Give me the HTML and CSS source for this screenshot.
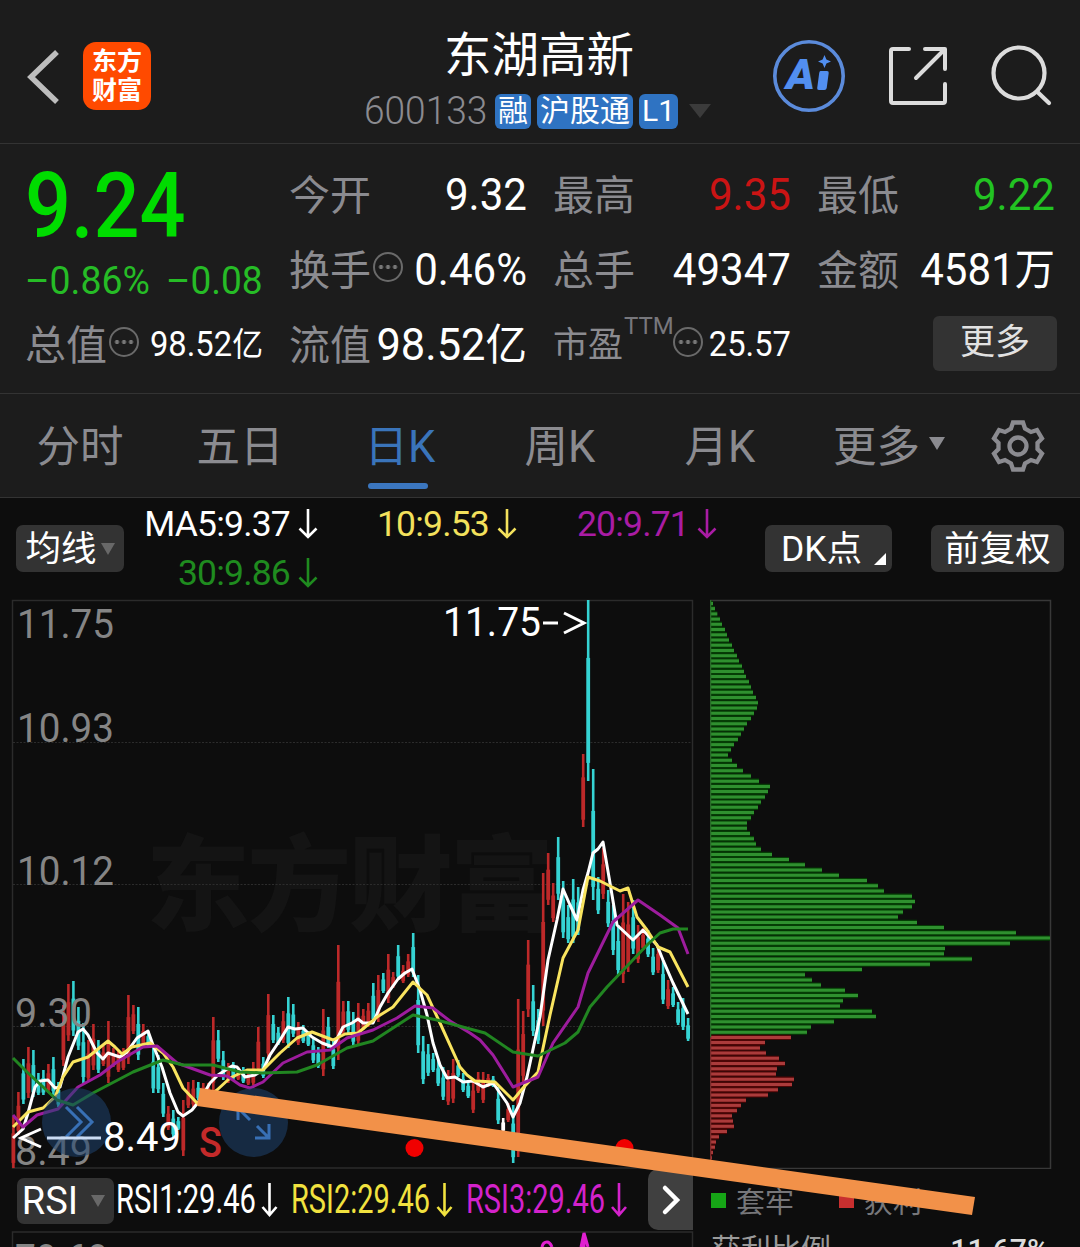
FILE: index.html
```
<!DOCTYPE html>
<html lang="zh-CN">
<head>
    <meta charset="UTF-8">
    <meta name="viewport" content="width=device-width, initial-scale=1.0">
    <title>东湖高新 600133</title>
    <link rel="stylesheet" href="styles.css">
</head>
<body>
<div class="page">
    <!-- Header -->
    <header class="header">
        <svg class="back" width="36" height="58" viewBox="0 0 36 58"><path d="M33 4L7 29L33 54" fill="none" stroke="#bdbdbd" stroke-width="5.5"/></svg>
        <div class="logo"><span>东方</span><span>财富</span></div>
        <div class="title-box">
            <div class="title">东湖高新</div>
            <div class="subtitle">
                <span class="code">600133</span>
                <span class="tag">融</span>
                <span class="tag">沪股通</span>
                <span class="tag">L1</span>
                <span class="tri tri-dark"></span>
            </div>
        </div>
        <div class="header-icons">
            <svg width="74" height="74" viewBox="0 0 74 74">
                <circle cx="37" cy="37" r="34.2" fill="none" stroke="#5b8bdb" stroke-width="3.6"/>
                <text class="ai-text" x="14" y="50" textLength="29" lengthAdjust="spacingAndGlyphs">A</text>
                <path d="M48.500 32h6.500q2 0 1.700 2l-2 15q-.300 2-2.300 2h-5.500q-2 0-1.700-2l2-15q.300-2 1.300-2z" fill="#528ff0"/>
                <path d="M52.500 16l1.900 4.600l4.600 1.900l-4.600 1.900l-1.900 4.600l-1.900-4.600l-4.600-1.900l4.600-1.900z" fill="#528ff0"/>
            </svg>
            <svg class="share" width="60" height="60" viewBox="0 0 60 60" fill="none" stroke="#dcdcdc" stroke-width="4" stroke-linecap="round" stroke-linejoin="round">
                <path d="M21 3H5a2 2 0 0 0-2 2V55a2 2 0 0 0 2 2H55a2 2 0 0 0 2-2V38M37 3H57V23M56 4L28 32"/>
            </svg>
            <svg class="search" width="62" height="62" viewBox="0 0 62 62" fill="none" stroke="#dcdcdc" stroke-width="4.200" stroke-linecap="round">
                <circle cx="28" cy="28" r="25.500"/><path d="M46.500 47L58 58"/>
            </svg>
        </div>
    </header>

    <!-- Quote -->
    <section class="quote">
        <div class="price-box">
            <div class="price">9.24</div>
            <div class="change"><span class="pct">–0.86%</span><span class="diff">–0.08</span></div>
        </div>
        <div class="cell"><span class="label">今开</span><span class="value">9.32</span></div>
        <div class="cell"><span class="label">最高</span><span class="value red">9.35</span></div>
        <div class="cell"><span class="label">最低</span><span class="value green">9.22</span></div>
        <div class="cell"><span class="label">换手</span><i class="info"></i><span class="value">0.46%</span></div>
        <div class="cell"><span class="label">总手</span><span class="value">49347</span></div>
        <div class="cell"><span class="label">金额</span><span class="value">4581<b>万</b></span></div>
        <div class="cell"><span class="label">总值</span><i class="info"></i><span class="value small">98.52<b>亿</b></span></div>
        <div class="cell"><span class="label">流值</span><span class="value wide">98.52<b>亿</b></span></div>
        <div class="cell"><span class="label label-pe">市盈</span><sup class="ttm">TTM</sup><i class="info"></i><span class="value small">25.57</span></div>
        <div class="cell cell-more"><button class="more">更多</button></div>
    </section>

    <!-- Period tabs -->
    <nav class="tabs">
        <a class="tab">分时</a>
        <a class="tab">五日</a>
        <a class="tab active">日K</a>
        <a class="tab">周K</a>
        <a class="tab">月K</a>
        <a class="tab tab-more">更多<span class="tri tri-tab"></span></a>
        <svg class="gear" width="54" height="54" viewBox="-27 -27 54 54" fill="none" stroke="#8b8b90" stroke-width="4.300">
            <path d="M-5-23.500H5L7-17.500L13-14L19-16L24-7.500L19.500-3V3L24 7.500L19 16L13 14L7 17.500L5 23.500H-5L-7 17.500L-13 14L-19 16L-24 7.500L-19.500 3V-3L-24-7.500L-19-16L-13-14L-7-17.500Z"/>
            <circle r="8.500"/>
        </svg>
    </nav>

    <!-- Moving averages -->
    <section class="ma-bar">
        <button class="btn btn-ma">均线<span class="tri tri-btn"></span></button>
        <div class="ma-list">
            <span class="ma ma5">MA5:9.37<svg class="down" viewBox="0 0 20 32"><path d="M10 1V29M1.500 20.500L10 29L18.500 20.500"/></svg></span>
            <span class="ma ma10">10:9.53<svg class="down" viewBox="0 0 20 32"><path d="M10 1V29M1.500 20.500L10 29L18.500 20.500"/></svg></span>
            <span class="ma ma20">20:9.71<svg class="down" viewBox="0 0 20 32"><path d="M10 1V29M1.500 20.500L10 29L18.500 20.500"/></svg></span>
            <span class="ma ma30">30:9.86<svg class="down" viewBox="0 0 20 32"><path d="M10 1V29M1.500 20.500L10 29L18.500 20.500"/></svg></span>
        </div>
        <button class="btn btn-dk"><span class="dk">DK</span>点<span class="corner"></span></button>
        <button class="btn btn-fq">前复权</button>
    </section>

    <!-- Charts -->
    <section class="charts">
        <div class="left">
            <svg class="kline" width="694" height="570" viewBox="0 599 694 570">
                <text class="watermark" x="146" y="923" textLength="408">东方财富</text>
                <rect class="frame" x="12.500" y="600.500" width="680" height="567.500"/>
                <path class="grid" d="M13 742.500H692M13 884.500H692M13 1026.500H692"/>
                <g id="candles"></g>
                <g class="axis">
                    <text x="17" y="638" textLength="97" lengthAdjust="spacingAndGlyphs">11.75</text>
                    <text x="17" y="742" textLength="97" lengthAdjust="spacingAndGlyphs">10.93</text>
                    <text x="17" y="885" textLength="97" lengthAdjust="spacingAndGlyphs">10.12</text>
                    <text x="15" y="1027" textLength="77" lengthAdjust="spacingAndGlyphs">9.30</text>
                    <text x="15" y="1165" textLength="77" lengthAdjust="spacingAndGlyphs">8.49</text>
                </g>
                <polyline class="line w" points="13,1138 23,1129 28,1113 35,1087 40,1081 48,1080 55,1088 60,1087 68,1057 78,1032 83,1029 88,1035 97,1053 103,1059 108,1053 120,1057 127,1052 137,1038 148,1031 153,1045 162,1067 170,1093 178,1112 183,1116 192,1110 200,1100 210,1083 218,1075 232,1066 237,1067 245,1077 255,1075 263,1070 270,1055 280,1040 288,1027 295,1029 303,1028 312,1037 322,1043 333,1047 343,1027 352,1023 358,1019 363,1023 373,1023 380,1007 388,993 398,979 405,973 412,969 420,990 427,1015 433,1043 440,1065 447,1078 455,1077 463,1082 473,1081 483,1087 493,1083 507,1103 513,1117 520,1103 527,1077 540,1017 548,960 557,920 563,889 570,905 577,920 583,890 588,873 593,853 598,849 603,842 610,883 617,925 633,940 643,930 657,945 663,960 673,983 688,1014"/>
                <polyline class="line y" points="13,1127 28,1112 43,1108 55,1097 63,1077 73,1062 88,1057 108,1041 115,1047 122,1054 132,1047 150,1043 163,1053 173,1067 183,1088 197,1103 217,1090 230,1078 247,1070 263,1070 280,1053 297,1038 312,1032 333,1040 345,1034 358,1033 377,1017 393,1007 413,982 427,995 440,1023 460,1067 467,1075 475,1081 495,1082 513,1100 523,1088 538,1072 550,1015 563,958 578,930 588,877 600,881 610,886 620,891 628,888 637,917 647,930 658,947 670,952 688,987"/>
                <polyline class="line p" points="13,1115 23,1127 37,1115 58,1109 78,1087 100,1075 117,1062 143,1047 157,1046 177,1063 210,1075 227,1076 240,1085 250,1088 263,1082 283,1063 307,1052 330,1050 347,1038 373,1030 397,1018 415,1006 433,1008 450,1021 470,1033 480,1040 493,1055 513,1087 523,1083 538,1077 553,1043 578,1007 588,973 613,922 638,900 660,915 678,928 688,954"/>
                <polyline class="line g" points="13,1058 27,1072 57,1100 73,1105 93,1093 133,1072 163,1060 183,1065 213,1065 240,1072 263,1073 297,1072 317,1065 347,1048 373,1041 413,1015 437,1020 470,1029 485,1033 513,1052 538,1056 565,1043 578,1032 590,1007 607,987 630,963 648,944 660,933 673,929 688,929"/>
                <circle class="round" cx="76.500" cy="1122.500" r="34.500"/>
                <circle class="round" cx="253.500" cy="1122.500" r="34.500"/>
                <path class="round-icon" d="M66 1107L81 1122L66 1137M77 1107L92 1122L77 1137"/>
                <path class="round-icon" d="M238 1120V1108H250M239 1109L250 1120M257 1126L269 1138M269 1124V1138H255"/>
                <g class="mark">
                    <text x="443" y="636" textLength="98" lengthAdjust="spacingAndGlyphs">11.75</text>
                    <path d="M543 623H558M564 613L584 623L564 633"/>
                    <path d="M41 1129L21 1138L41 1147"/>
                    <path class="dash" d="M47 1138H101"/>
                    <text x="103" y="1151" textLength="78" lengthAdjust="spacingAndGlyphs">8.49</text>
                </g>
                <text class="sell" x="199" y="1157">S</text>
                <circle cx="414.500" cy="1148" r="9" fill="#f00000"/>
                <circle cx="624.500" cy="1148" r="9" fill="#f00000"/>
            </svg>
            <div class="rsi-bar">
                <button class="btn btn-rsi"><span>RSI</span><span class="tri tri-btn"></span></button>
                <svg class="rsi-values" width="530" height="62" viewBox="115 1169 530 62">
                    <g class="r1"><text x="116" y="1213" textLength="140" lengthAdjust="spacingAndGlyphs">RSI1:29.46</text><path d="M269.500 1183V1214M262.500 1207L269.500 1215L276.500 1207"/></g>
                    <g class="r2"><text x="291" y="1213" textLength="139" lengthAdjust="spacingAndGlyphs">RSI2:29.46</text><path d="M444.500 1183V1214M437.500 1207L444.500 1215L451.500 1207"/></g>
                    <g class="r3"><text x="466" y="1213" textLength="139" lengthAdjust="spacingAndGlyphs">RSI3:29.46</text><path d="M619 1183V1214M612 1207L619 1215L626 1207"/></g>
                </svg>
                <button class="next"><svg width="20" height="32" viewBox="0 0 20 32"><path d="M4 4L16 16L4 28" fill="none" stroke="#fff" stroke-width="4.500" stroke-linecap="round"/></svg></button>
            </div>
            <svg class="rsi-chart" width="694" height="16" viewBox="0 1231 694 16">
                <path class="frame" d="M12.500 1247V1232H692.500V1247"/>
                <g class="axis"><text x="15" y="1273" textLength="93" lengthAdjust="spacingAndGlyphs">70.60</text></g>
                <path d="M542 1247Q543 1242 547 1242Q550 1242 552 1247M581 1247L584 1233L588 1247M584 1234V1247" fill="none" stroke="#e020d0" stroke-width="3"/>
            </svg>
        </div>
        <div class="right">
            <svg class="chips" width="342" height="570" viewBox="710 599 342 570">
                <path class="chip-frame" d="M710 600.500H1050.500V1168.500H710.500V600"/>
                <g id="chips"></g>
            </svg>
            <div class="legend">
                <span><i class="box box-green"></i>套牢</span>
                <span><i class="box box-red"></i>获利</span>
            </div>
            <div class="ratio"><span>获利比例</span><b>11.67%</b></div>
        </div>
    </section>

    <svg class="trend" width="1080" height="1247" viewBox="0 0 1080 1247"><path d="M200 1088L975 1197L972 1215L197 1106Z" fill="#f29149"/></svg>
</div>
<script src="chart.js"></script>
</body>
</html>
```
FILE: styles.css
```
* {
    box-sizing: border-box;
}

body {
    margin: 0;
    background-color: #0d0d0d;
    color: #fff;
    font-family: Roboto, "Noto Sans CJK SC", sans-serif;
}

button {
    border: none;
    color: #fff;
    font-family: inherit;
    padding: 0;
}

svg {
    display: block;
    flex-shrink: 0;
}

.page {
    position: relative;
    width: 1080px;
    height: 1247px;
    overflow: hidden;
}

/* header */
.header {
    display: flex;
    height: 144px;
    padding: 0 27px 0 24px;
    background-color: #1c1c1c;
    border-bottom: 1px solid #333;
}

.back {
    margin-top: 48px;
}

.logo {
    display: flex;
    flex-direction: column;
    align-items: center;
    width: 68px;
    height: 68px;
    margin: 42px 0 0 23px;
    padding-top: 5px;
    border-radius: 13px;
    background-color: #ff4a00;
    font-size: 25px;
    font-weight: 700;
    line-height: 29px;
}

.title-box {
    flex: 1;
    margin-left: 213px;
    padding-top: 26px;
}

.title {
    margin-left: 80px;
    font-size: 47.5px;
    line-height: 60px;
}

.subtitle {
    display: flex;
    align-items: center;
    height: 36px;
    margin-top: 7px;
}

.code {
    width: 131px;
    color: #8b8b90;
    font-size: 39px;
    font-weight: 300;
    transform: scaleX(0.95);
    transform-origin: left;
}

.tag {
    height: 35px;
    margin-right: 6px;
    padding: 0 3px;
    border-radius: 6px;
    background-color: #2f73c2;
    font-size: 30px;
    line-height: 34px;
    white-space: nowrap;
}

.tri {
    display: inline-block;
    border-style: solid;
    border-color: transparent;
    border-bottom-width: 0;
}

.tri-dark {
    margin-left: 5px;
    border-width: 14px 11px 0;
    border-top-color: #3b3b3b;
}

.header-icons {
    display: flex;
    padding-top: 39px;
}

.ai-text {
    fill: #528ff0;
    font-size: 42px;
    font-weight: 900;
    font-style: italic;
}

.share {
    margin: 7px 0 0 42px;
}

.search {
    margin: 6px 0 0 43px;
}

/* quote */
.quote {
    display: grid;
    grid-template-columns: repeat(4, 238px);
    grid-template-rows: repeat(3, 75px);
    column-gap: 26px;
    height: 250px;
    padding: 13px 0 0 25px;
    background-color: #1c1c1c;
    border-bottom: 1px solid #333;
}

.price-box {
    grid-row: span 2;
}

.price {
    height: 94px;
    color: #00dc00;
    font-size: 90px;
    font-weight: 500;
    line-height: 100px;
    transform: scaleX(0.9);
    transform-origin: left;
}

.change {
    display: flex;
    justify-content: space-between;
    color: #26bc26;
    font-size: 39px;
    line-height: 61px;
}

.pct {
    transform: scaleX(0.96);
    transform-origin: left;
}

.diff {
    transform: scaleX(0.95);
    transform-origin: right;
}

.cell {
    display: flex;
    align-items: center;
    height: 75px;
    white-space: nowrap;
}

.label {
    padding-top: 3px;
    color: #8b8b90;
    font-size: 41px;
    line-height: 60px;
}

.label-pe {
    font-size: 35px;
}

.ttm {
    width: 47px;
    margin: -38px 0 0 1px;
    color: #77777c;
    font-size: 24px;
    line-height: 28px;
}

.info {
    width: 30px;
    height: 30px;
    margin: -6px 0 0 2px;
    border: 2.5px solid #6a6a6a;
    border-radius: 50%;
    background: radial-gradient(circle, #777 1.8px, transparent 2.3px) center / 7px 30px;
    background-clip: content-box;
    padding: 0 2px;
}

.value {
    flex: 1 0 0;
    width: 0;
    display: flex;
    justify-content: flex-end;
    align-items: baseline;
    font-size: 45px;
    line-height: 60px;
    transform: scaleX(0.935);
    transform-origin: right;
}

.value b {
    font-weight: 400;
    font-size: 43px;
}

.value.wide {
    transform: scaleX(0.965);
}

.value.small {
    font-size: 35px;
}

.value.small b {
    font-size: 33px;
}

.red {
    color: #cb1414;
}

.green {
    color: #22c322;
}

.cell-more {
    justify-content: flex-end;
}

.more {
    width: 124px;
    height: 55px;
    margin: -3px -2px 0 0;
    border-radius: 6px;
    background-color: #333;
    color: #e2e2e2;
    font-size: 35px;
    line-height: 52px;
}

/* tabs */
.tabs {
    display: flex;
    height: 104px;
    background-color: #1c1c1c;
    border-bottom: 1px solid #333;
}

.tab {
    display: flex;
    align-items: center;
    justify-content: center;
    width: 160px;
    height: 98px;
    color: #8b8b90;
    font-size: 43.5px;
}

.tab-more {
    width: 178px;
}

.tab.active {
    position: relative;
    color: #3a74ba;
}

.tab.active::after {
    content: "";
    position: absolute;
    left: 48px;
    bottom: 3px;
    width: 60px;
    height: 6px;
    border-radius: 3px;
    background-color: #3b76bf;
}

.tri-tab {
    margin: 0 0 0 9px;
    border-width: 13px 8px 0;
    border-top-color: #8b8b90;
}

.gear {
    margin: 25px 0 0 13px;
}

/* moving averages */
.ma-bar {
    display: flex;
    height: 101px;
    padding: 27px 16px 0;
}

.btn {
    display: flex;
    align-items: center;
    justify-content: center;
    height: 47px;
    border-radius: 7px;
    background-color: #333;
    font-size: 35.5px;
    line-height: 44px;
    white-space: nowrap;
}

.btn-ma {
    width: 108px;
}

.tri-btn {
    margin-left: 4px;
    border-width: 12px 7px 0;
    border-top-color: #686868;
}

.ma-list {
    display: grid;
    grid-template-columns: 173px 199px 200px;
    grid-auto-rows: 49px;
    width: 641px;
    margin: -26px 0 0 21px;
}

.ma {
    display: flex;
    align-items: center;
    justify-content: flex-end;
    font-size: 35.5px;
    letter-spacing: -0.8px;
}

.down {
    width: 20px;
    height: 32px;
    margin-left: 8px;
    fill: none;
    stroke: currentColor;
    stroke-width: 2.6;
}

.ma5 {
    color: #fff;
}

.ma10 {
    color: #f3e15c;
}

.ma20 {
    color: #a91ca4;
}

.ma30 {
    color: #1f8b1f;
}

.btn-dk {
    position: relative;
    width: 127px;
    margin-left: -20px;
    padding-right: 14px;
    margin-right: 39px;
}

.corner {
    position: absolute;
    right: 6px;
    bottom: 7px;
    border-left: 12px solid transparent;
    border-bottom: 12px solid #fff;
}

.btn-fq {
    width: 133px;
}

.btn-ma,
.btn-dk,
.btn-fq,
.btn-rsi {
    flex-shrink: 0;
}

/* charts */
.charts {
    display: flex;
}

.left {
    width: 694px;
}

.right {
    width: 342px;
    margin-left: 16px;
}

.frame {
    fill: none;
    stroke: #2b2b2b;
    stroke-width: 1.5;
}

.chip-frame {
    fill: none;
    stroke: #383838;
    stroke-width: 1.5;
}

.grid {
    stroke: #2c2c2c;
    stroke-dasharray: 2 1.5;
}

.watermark {
    fill: #141414;
    font-size: 104px;
    font-weight: 900;
}

.axis text {
    fill: #858585;
    font-size: 41px;
}

.candle-up {
    stroke: #bd2929;
}

.candle-down {
    stroke: #35d3d3;
}

.candle-flat {
    stroke: #fff;
}

.line {
    fill: none;
    stroke-width: 3;
    stroke-linejoin: round;
}

.w {
    stroke: #fff;
}

.y {
    stroke: #f9e45f;
}

.p {
    stroke: #9d1c9d;
}

.g {
    stroke: #218521;
}

.round {
    fill: rgba(31, 67, 112, 0.55);
}

.round-icon {
    fill: none;
    stroke: #3870b5;
    stroke-width: 3;
}

.mark text {
    fill: #fff;
    font-size: 41px;
}

.mark path {
    fill: none;
    stroke: #fff;
    stroke-width: 3;
}

.mark .dash {
    stroke: #cbdcf4;
}

.sell {
    fill: #c42a2a;
    font-size: 42px;
    font-weight: 500;
    transform: scaleX(0.9);
    transform-box: fill-box;
}

/* rsi */
.rsi-bar {
    display: flex;
    height: 62px;
    padding-left: 17px;
}

.btn-rsi {
    width: 97px;
    height: 46px;
    margin-top: 9px;
    padding-right: 4px;
    font-size: 38px;
    gap: 9px;
}

.rsi-values {
    margin-left: 1px;
}

.rsi-values text {
    font-size: 40px;
}

.rsi-values path {
    fill: none;
    stroke-width: 2.6;
}

.r1 text {
    fill: #fff;
}

.r1 path {
    stroke: #fff;
}

.r2 text {
    fill: #f1e23f;
}

.r2 path {
    stroke: #f1e23f;
}

.r3 text {
    fill: #d322cb;
}

.r3 path {
    stroke: #d322cb;
}

.next {
    display: flex;
    align-items: center;
    justify-content: center;
    width: 45px;
    height: 61px;
    margin-left: 3px;
    border-radius: 10px 0 0 10px;
    background-color: #404040;
}

.legend {
    display: flex;
    gap: 44px;
    height: 62px;
    color: #77777a;
    font-size: 29px;
}

.legend span {
    display: flex;
    align-items: center;
}

.box {
    width: 15px;
    height: 15px;
    margin: 1px 10px 0 1px;
}

.box-green {
    background-color: #16a516;
}

.box-red {
    background-color: #c82f2f;
}

.ratio {
    display: flex;
    justify-content: space-between;
    padding: 0 3px 0 1px;
    color: #9a9a9a;
    font-size: 30px;
    line-height: 38px;
}

.ratio b {
    color: #ddd;
    font-weight: 500;
}

.trend {
    position: absolute;
    left: 0;
    top: 0;
}
```
FILE: chart.js
```
const NS = 'http://www.w3.org/2000/svg';

// type, high, low (u = up, d = down, f = flat)
const candles = `u1117,1168 u1092,1135 d1059,1104 u1047,1098 d1050,1097 d1073,1095 d1070,1095 u1064,1093 d1057,1095 d1082,1107
u1005,1066 u984,1041 d981,1036 d1007,1050 d1023,1083 u1040,1082 u1024,1070 d1040,1073 u1046,1066 u1021,1083
u1048,1067 u1050,1072 u1048,1070 u995,1064 u1005,1034 d1007,1060 u1024,1046 d1031,1047 d1047,1093 d1055,1093
d1083,1117 u1106,1130 d1110,1137 d1117,1130 u1100,1156 u1082,1108 u1080,1107 d1082,1100 u1083,1097 u1083,1097
u1017,1090 d1030,1062 d1051,1080 u1063,1083 d1062,1080 u1067,1080 d1067,1083 u1070,1085 u1062,1085 u1027,1073
d1057,1078 u994,1060 d1015,1043 d1027,1045 u1011,1043 d997,1048 d1004,1037 u1022,1045 d1025,1043 d1031,1046
d1037,1063 d1047,1068 u1009,1076 d1017,1048 d1040,1069 u945,1060 u1001,1034 d1001,1033 d1012,1045 u1003,1045
u1009,1030 u1003,1027 d983,1023 u975,1022 d973,993 u954,1003 u972,988 d945,980 u965,983 u954,977
d933,977 d975,1053 d1036,1084 d1044,1076 d1053,1072 d1060,1086 d1067,1100 u1070,1105 u1059,1103 d1060,1077
d1073,1092 d1080,1098 u1080,1113 u1072,1093 u1072,1103 u1074,1087 d1076,1087 d1087,1124 f1118,1132 u1103,1122
d1105,1163 u999,1157 u1011,1083 u940,1017 d985,1036 d1009,1044 u873,1026 u853,905 u883,922 d837,900
d881,938 d905,943 d879,943 d887,935 u754,827 d600,781 d769,900 d877,914 u848,899 d890,927
d905,955 d925,975 u894,983 u902,972 d900,954 u925,963 u928,950 d930,957 d948,975 u945,973
d960,1004 u980,1009 d987,1007 d1002,1025 d998,1030 d1018,1041`.split(/\s+/);

// bar widths of the cost distribution, top to bottom
const chips = [2, 4, 6.3, 9, 11, 14, 16, 18, 21, 23, 26, 28, 31, 33, 35, 38, 40, 42, 45, 47, 46, 43, 40, 36, 33, 30, 27, 23, 20, 17,
    21, 26, 32, 40, 48, 59, 57, 54, 50, 47, 43, 40, 36, 36, 39, 43, 45, 50, 61, 78, 94, 111, 128, 156, 167, 173, 201, 204, 201, 192,
    187, 206, 233, 305, 339, 299, 234, 233, 261, 219, 151, 94, 101, 110, 134, 147, 132, 129, 161, 165, 123, 100, 96,
    80, 54, 49, 55, 68, 74, 66, 65, 83, 81, 67, 57, 35, 30, 26, 21, 22, 23, 16, 8, 5, 4, 2, 1];
const firstProfit = 83;

function addPath(parent, d, cls, width, color) {
    const p = document.createElementNS(NS, 'path');
    p.setAttribute('d', d);
    if (cls) p.setAttribute('class', cls);
    if (color) p.setAttribute('stroke', color);
    p.setAttribute('stroke-width', width);
    parent.appendChild(p);
}

const candleBox = document.getElementById('candles');
const cls = { u: 'candle-up', d: 'candle-down', f: 'candle-flat' };
candles.forEach((c, i) => {
    const x = (13.4 + i * 4.998).toFixed(1);
    const [high, low] = c.slice(1).split(',').map(Number);
    const range = low - high;
    addPath(candleBox, `M${x} ${high}V${low}`, cls[c[0]], 2.6);
    addPath(candleBox, `M${x} ${high + range * 0.32}V${low - range * 0.1}`, cls[c[0]], 3.8);
});

const chipBox = document.getElementById('chips');
chips.forEach((w, i) => {
    const y = (603.4 + i * 5.229).toFixed(1);
    const up = i >= firstProfit;
    addPath(chipBox, `M711 ${y}h${w}`, '', 5.2, up ? '#4d0606' : '#053d05');
    addPath(chipBox, `M711 ${y}h${w}`, '', 3, up ? '#ab3b3b' : '#2f902f');
});
addPath(chipBox, 'M710.500 600V1037', '', 1.5, '#2a6a2a');
addPath(chipBox, 'M710.500 1037V1160', '', 1.5, '#7a2c2c');
```
